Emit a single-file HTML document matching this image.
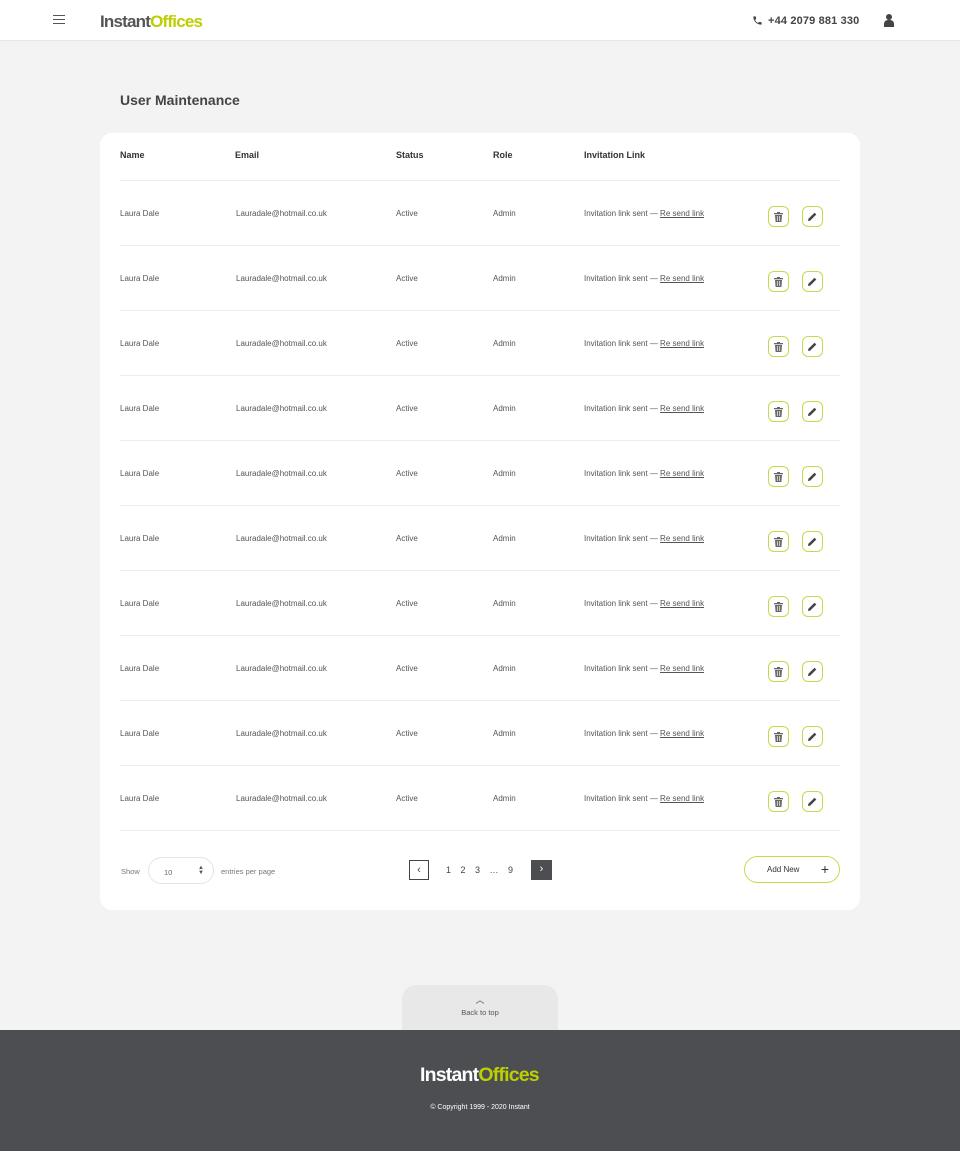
<!DOCTYPE html>
<html><head><meta charset="utf-8"><style>
*{margin:0;padding:0;box-sizing:border-box}
body{width:960px;height:1151px;background:#f3f3f3;font-family:"Liberation Sans",Arial,sans-serif;color:#444;position:relative;overflow:hidden}
.hdr{position:absolute;top:0;left:0;width:960px;height:41px;background:#fff;border-bottom:1px solid #e6e6e6}
.logo{position:absolute;font-weight:bold;letter-spacing:-0.8px}
.logo .g{color:#bccf00}
h1{position:absolute;left:120px;top:92px;font-size:14px;font-weight:bold;color:#444}
.card{position:absolute;left:100px;top:133px;width:760px;height:777px;background:#fff;border-radius:12px}
.th{position:absolute;top:150px;font-size:9px;font-weight:bold;color:#333}
.row{position:absolute;left:120px;width:720px;height:65px;border-top:1px solid #ececec}
.row span{position:absolute;top:28px;font-size:8px;color:#555}
.row u{color:#555}
.btn{position:absolute;top:25px;width:21px;height:21px;border:1px solid #c9d84a;border-radius:6px;display:flex;align-items:center;justify-content:center}
.foot{position:absolute;top:1030px;left:0;width:960px;height:121px;background:#4d4e52}
.tab{position:absolute;left:402px;top:985px;width:156px;height:45px;background:#e8e8e8;border-radius:14px 14px 0 0;text-align:center;font-size:7.5px;color:#555}
</style></head><body>
<div class="hdr">
<div style="position:absolute;left:53px;top:15px;width:12px;height:1px;background:#555;box-shadow:0 4px 0 #555,0 8px 0 #555"></div>
<div class="logo" style="left:100px;top:12px;font-size:17px;color:#555">Instant<span class="g">Offices</span></div>
<svg style="position:absolute;left:752px;top:15px" width="11" height="11" viewBox="0 0 24 24"><path fill="#444" d="M6.6 10.8a15 15 0 006.6 6.6l2.2-2.2c.3-.3.7-.4 1-.2 1.1.4 2.3.6 3.6.6.6 0 1 .4 1 1V20c0 .6-.4 1-1 1C10.6 21 3 13.4 3 4c0-.6.4-1 1-1h3.5c.6 0 1 .4 1 1 0 1.3.2 2.5.6 3.6.1.3 0 .7-.2 1z"/></svg>
<div style="position:absolute;left:768px;top:15px;font-size:11px;font-weight:bold;color:#444;letter-spacing:0.15px">+44 2079 881 330</div>
<svg style="position:absolute;left:884px;top:14px" width="10" height="13" viewBox="0 0 10 13"><circle cx="5" cy="3" r="3" fill="#444"/><path d="M0 13v-3a4 4 0 014-4h2a4 4 0 014 4v3z" fill="#444"/></svg>
</div>
<h1>User Maintenance</h1>
<div class="card"></div>
<div class="th" style="left:120px">Name</div><div class="th" style="left:235px">Email</div><div class="th" style="left:396px">Status</div><div class="th" style="left:493px">Role</div><div class="th" style="left:584px">Invitation Link</div>
<div id="rows"></div>
<script>
var h='';for(var i=0;i<10;i++){var t=180+i*65;h+='<div class="row" style="top:'+t+'px"><span style="left:0">Laura Dale</span><span style="left:116px">Lauradale@hotmail.co.uk</span><span style="left:276px">Active</span><span style="left:373px">Admin</span><span style="left:464px">Invitation link sent — <u>Re send link</u></span><div class="btn" style="left:648px"><svg width="9" height="10" viewBox="0 0 9 10"><rect x="0" y="1" width="9" height="1.3" fill="#666"/><rect x="3" y="0" width="3" height="1.3" fill="#666"/><path d="M1 3h7l-.6 7H1.6z" fill="#666"/><path d="M3.3 4v5M5.7 4v5" stroke="#fff" stroke-width=".7"/></svg></div><div class="btn" style="left:682px"><svg width="9" height="9" viewBox="0 0 9 9"><path d="M0 9l.4-2.2L6.5.7l1.8 1.8L2.2 8.6z" fill="#444"/></svg></div></div>';}
h+='<div class="row" style="top:830px;height:1px"></div>';document.getElementById('rows').innerHTML=h;
</script>
<div style="position:absolute;left:121px;top:867px;font-size:7.5px;color:#777">Show</div>
<div style="position:absolute;left:148px;top:857px;width:66px;height:27px;border:1px solid #e4e4e4;border-radius:14px;font-size:7.5px;color:#666;padding:10px 0 0 15px">10<span style="position:absolute;right:9px;top:8px;font-size:6px;line-height:5px;color:#555">▲<br>▼</span></div>
<div style="position:absolute;left:221px;top:867px;font-size:7.5px;color:#777">entries per page</div>
<div style="position:absolute;left:409px;top:860px;width:20px;height:20px;border:1px solid #444;font-size:11px;text-align:center;line-height:18px;color:#444">‹</div>
<div style="position:absolute;left:446px;top:865px;font-size:9px;color:#444;word-spacing:7px">1 2 3 … 9</div>
<div style="position:absolute;left:531px;top:860px;width:21px;height:20px;background:#4d4e52;color:#fff;font-size:11px;text-align:center;line-height:19px">›</div>
<div style="position:absolute;left:744px;top:856px;width:96px;height:27px;border:1px solid #c9d84a;border-radius:14px;font-size:8px;color:#333;padding:8px 0 0 22px">Add New<span style="position:absolute;right:10px;top:4px;font-size:14px">+</span></div>
<div class="tab"><div style="margin-top:8px;font-size:9px">︿</div><div style="margin-top:2px">Back to top</div></div>
<div class="foot">
<div class="logo" style="left:420px;top:34px;font-size:19.5px;color:#fff">Instant<span class="g">Offices</span></div>
<div style="position:absolute;left:0;width:960px;top:74px;text-align:center;font-size:7px;color:#fff">© Copyright 1999 - 2020 Instant</div>
</div>
</body></html>
